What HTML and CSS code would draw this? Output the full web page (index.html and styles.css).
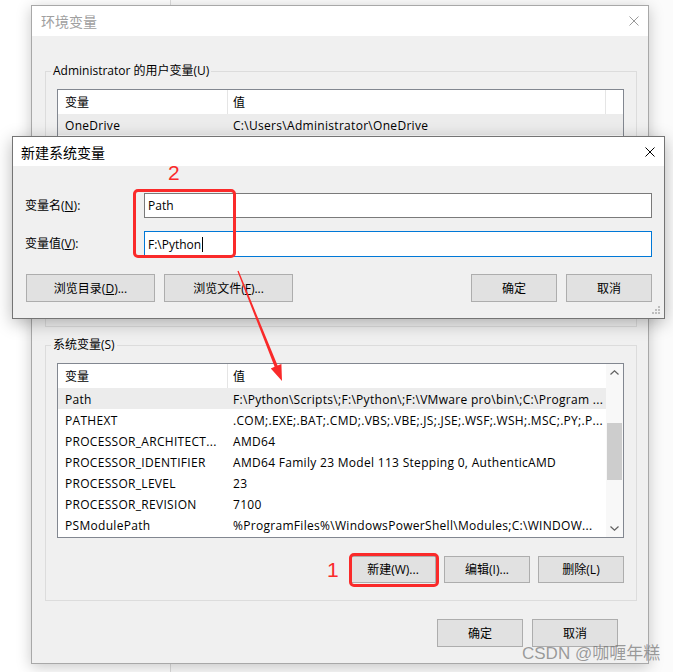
FILE: index.html
```html
<!DOCTYPE html>
<html lang="zh-CN">
<head>
<meta charset="utf-8">
<title>环境变量</title>
<link rel="stylesheet" href="styles.css">
</head>
<body>
<div class="desktop">
  <div class="bgwin"></div>

  <div class="win env">
    <div class="titlebar inactive">
      <span class="title">环境变量</span>
      <svg class="close" width="10" height="10" viewBox="0 0 10 10"><path d="M0.5 0.5L9.5 9.5M9.5 0.5L0.5 9.5" stroke="currentColor" stroke-width="1" fill="none"/></svg>
    </div>
    <div class="winbody">
      <fieldset class="group first">
        <legend>Administrator 的用户变量(U)</legend>
        <div class="list">
          <div class="list-main">
            <div class="hdr"><div class="c1">变量</div><div class="c2">值</div><div class="c3"></div></div>
            <div class="row hot"><div class="c1">OneDrive</div><div class="c2">C:\Users\Administrator\OneDrive</div></div>
            <div class="row"><div class="c1">Path</div><div class="c2">C:\Users\Administrator\AppData\Local\Microsoft\WindowsApps;</div></div>
            <div class="row"><div class="c1">TEMP</div><div class="c2">C:\Users\Administrator\AppData\Local\Temp</div></div>
            <div class="row"><div class="c1">TMP</div><div class="c2">C:\Users\Administrator\AppData\Local\Temp</div></div>
          </div>
        </div>
        <div class="btnrow">
          <button class="btn">新建(N)...</button>
          <button class="btn">编辑(E)...</button>
          <button class="btn">删除(D)</button>
        </div>
      </fieldset>

      <fieldset class="group">
        <legend>系统变量(S)</legend>
        <div class="list">
          <div class="list-main">
            <div class="hdr"><div class="c1">变量</div><div class="c2">值</div></div>
            <div class="row hot"><div class="c1">Path</div><div class="c2">F:\Python\Scripts\;F:\Python\;F:\VMware pro\bin\;C:\Program ...</div></div>
            <div class="row"><div class="c1">PATHEXT</div><div class="c2">.COM;.EXE;.BAT;.CMD;.VBS;.VBE;.JS;.JSE;.WSF;.WSH;.MSC;.PY;.P...</div></div>
            <div class="row"><div class="c1">PROCESSOR_ARCHITECT...</div><div class="c2">AMD64</div></div>
            <div class="row"><div class="c1">PROCESSOR_IDENTIFIER</div><div class="c2">AMD64 Family 23 Model 113 Stepping 0, AuthenticAMD</div></div>
            <div class="row"><div class="c1">PROCESSOR_LEVEL</div><div class="c2">23</div></div>
            <div class="row"><div class="c1">PROCESSOR_REVISION</div><div class="c2">7100</div></div>
            <div class="row"><div class="c1">PSModulePath</div><div class="c2">%ProgramFiles%\WindowsPowerShell\Modules;C:\WINDOW...</div></div>
          </div>
          <div class="vscroll">
            <div class="sbtn"><svg width="9" height="5" viewBox="0 0 9 5"><path d="M0.5 4.5L4.5 0.8L8.5 4.5" stroke="#606060" stroke-width="1.2" fill="none"/></svg></div>
            <div class="track"><div class="thumb"></div></div>
            <div class="sbtn"><svg width="9" height="5" viewBox="0 0 9 5"><path d="M0.5 0.5L4.5 4.2L8.5 0.5" stroke="#606060" stroke-width="1.2" fill="none"/></svg></div>
          </div>
        </div>
        <div class="btnrow">
          <button class="btn">新建(W)...</button>
          <button class="btn">编辑(I)...</button>
          <button class="btn">删除(L)</button>
        </div>
      </fieldset>

      <div class="btnrow footer">
        <button class="btn">确定</button>
        <button class="btn">取消</button>
      </div>
    </div>
  </div>

  <div class="win dlg">
    <div class="titlebar">
      <span class="title">新建系统变量</span>
      <svg class="close" width="10" height="10" viewBox="0 0 10 10"><path d="M0.5 0.5L9.5 9.5M9.5 0.5L0.5 9.5" stroke="currentColor" stroke-width="1" fill="none"/></svg>
    </div>
    <div class="dlgbody">
      <div class="form">
        <div class="lbl">变量名(<u>N</u>):</div>
        <div class="field">Path</div>
        <div class="lbl">变量值(<u>V</u>):</div>
        <div class="field focus">F:\Python<span class="caret"></span></div>
      </div>
      <div class="dlgbtns">
        <div class="btngroup">
          <button class="btn wide">浏览目录(<u>D</u>)...</button>
          <button class="btn wide">浏览文件(<u>F</u>)...</button>
        </div>
        <div class="btngroup">
          <button class="btn">确定</button>
          <button class="btn">取消</button>
        </div>
      </div>
    </div>
    <svg class="grip" width="9" height="9" viewBox="0 0 9 9"><g fill="#bdbdbd"><rect x="6" y="0" width="2" height="2"/><rect x="3" y="3" width="2" height="2"/><rect x="6" y="3" width="2" height="2"/><rect x="0" y="6" width="2" height="2"/><rect x="3" y="6" width="2" height="2"/><rect x="6" y="6" width="2" height="2"/></g></svg>
  </div>

  <div class="mark mark-field"></div>
  <div class="mark mark-new"></div>
  <div class="num num2">2</div>
  <div class="num num1">1</div>
  <svg class="arrow" width="673" height="672" viewBox="0 0 673 672">
    <polygon points="237.4,271.2 238.6,270.8 277.6,365.6 281.4,364.0 282,381 270.8,368.4 274.6,366.8" fill="#f92a2a"/>
  </svg>
  <div class="watermark">CSDN @咖喱年糕</div>
</div>
</body>
</html>
```

FILE: styles.css
```css
* { box-sizing: border-box; }
html, body { margin: 0; padding: 0; }
body {
  width: 673px;
  height: 672px;
  overflow: hidden;
  background: #ffffff;
  font-family: "Open Sans", "Noto Sans CJK SC", sans-serif;
  font-size: 12px;
  color: #000;
}
.desktop { position: relative; width: 673px; height: 672px; overflow: hidden; }
.bgwin {
  position: absolute; left: 170px; top: 0; right: 0; bottom: 0;
  border-left: 1px solid #dcdcdc; background: #fbfbfb;
}

.win { position: absolute; display: flex; flex-direction: column; background: #f0f0f0; }
.env {
  left: 31px; top: 5px; width: 618px; height: 659px;
  border: 1px solid #a8a8a8;
  box-shadow: 0 3px 14px rgba(0, 0, 0, 0.22);
}
.dlg {
  left: 12px; top: 136px; width: 653px; height: 183px;
  border: 1px solid #747474;
  box-shadow: 0 4px 16px rgba(0, 0, 0, 0.28);
}

.titlebar {
  display: flex; align-items: center; justify-content: space-between;
  background: #fff; height: 29px; padding: 0 9px 0 8px; flex: none;
}
.env .titlebar { height: 30px; padding-left: 9px; }
.titlebar .title { font-family: "Noto Sans CJK SC", sans-serif; font-size: 14px; line-height: 18px; color: #000; }
.titlebar .close { color: #000; }
.titlebar.inactive .title { color: #a0a0a0; }
.titlebar.inactive .close { color: #9a9a9a; }

.winbody { display: flex; flex-direction: column; padding: 0 11px 0 13px; }

.group {
  margin: 10px 0 0 0;
  border: 1px solid #dcdcdc;
  padding: 10px 12px 17px 11px;
  min-width: 0;
}
.group.first { margin-top: 27px; }
.group legend {
  margin-left: -6px; padding: 0 2px;
  line-height: 16px; height: 16px;
}

.list {
  height: 175px; border: 1px solid #828790; background: #fff;
  display: flex; overflow: hidden;
}
.list-main { flex: 1; min-width: 0; }
.hdr { display: flex; height: 24px; line-height: 22px; }
.hdr .c1, .hdr .c2 { padding-top: 2px; }
.hdr .c1 { border-right: 1px solid #e5e5e5; }
.hdr .c3 { flex: none; width: 18px; border-left: 1px solid #e5e5e5; margin-left: auto; }
.row { display: flex; height: 21px; line-height: 20px; }
.row .c1, .row .c2 { padding-top: 2px; letter-spacing: 0.3px; }
.row.hot { background: #ececec; }
.c1 { flex: none; width: 170px; padding-left: 7px; white-space: nowrap; overflow: hidden; }
.c2 { flex: 1; padding-left: 5px; white-space: nowrap; overflow: hidden; }

.vscroll { flex: none; width: 17px; display: flex; flex-direction: column; background: #f8f8f8; }
.sbtn { height: 17px; display: flex; align-items: center; justify-content: center; flex: none; }
.track { flex: 1; padding: 42px 1px 0 1px; }
.thumb { height: 57px; background: #cdcdcd; }

.btnrow { display: flex; justify-content: flex-end; gap: 8px; margin-top: 18px; }
.btn {
  font: inherit; color: #000;
  width: 86px; height: 27px; padding: 0;
  background: #e1e1e1; border: 1px solid #adadad; border-radius: 0;
  line-height: 25px;
}
.btn u { text-decoration: underline; }
.btnrow.footer { margin-top: 18px; padding-right: 19px; gap: 9px; }
.btnrow.footer .btn { width: 86px; height: 28px; }

.dlgbody { flex: 1; padding: 27px 12px 0 13px; }
.form { display: grid; grid-template-columns: 118px 1fr; row-gap: 13px; align-items: center; }
.lbl { padding-left: 0; line-height: 16px; margin-left: -1px; }
.field {
  height: 25px; background: #fff; border: 1px solid #7a7a7a;
  padding-left: 3px; line-height: 23px; display: flex; align-items: center;
}
.field.focus { border-color: #0078d7; height: 26px; }
.caret { display: inline-block; width: 1px; height: 15px; background: #000; margin-left: 1px; }
.dlgbtns { display: flex; justify-content: space-between; margin-top: 17px; }
.btngroup { display: flex; gap: 9px; }
.dlgbtns .btn { height: 28px; width: 86px; }
.dlgbtns .btn.wide { width: 129px; }
.grip { position: absolute; right: 3px; bottom: 3px; }

.mark {
  position: absolute; border: 3px solid #fa2a2a; border-radius: 5px;
}
.mark-field { left: 133px; top: 189px; width: 103px; height: 69px; }
.mark-new { left: 349px; top: 553px; width: 90px; height: 34px; }
.num {
  position: absolute; font-family: "Liberation Sans", sans-serif;
  font-size: 21px; line-height: 21px; color: #fa2a2a;
}
.num2 { left: 168px; top: 162px; }
.num1 { left: 327px; top: 559px; }
.arrow { position: absolute; left: 0; top: 0; pointer-events: none; }
.watermark {
  position: absolute; left: 522px; top: 645px;
  font-family: "Liberation Sans", "Noto Sans CJK SC", sans-serif;
  font-size: 17px; line-height: 17px; color: rgba(120, 120, 120, 0.72);
  white-space: nowrap;
}
```
